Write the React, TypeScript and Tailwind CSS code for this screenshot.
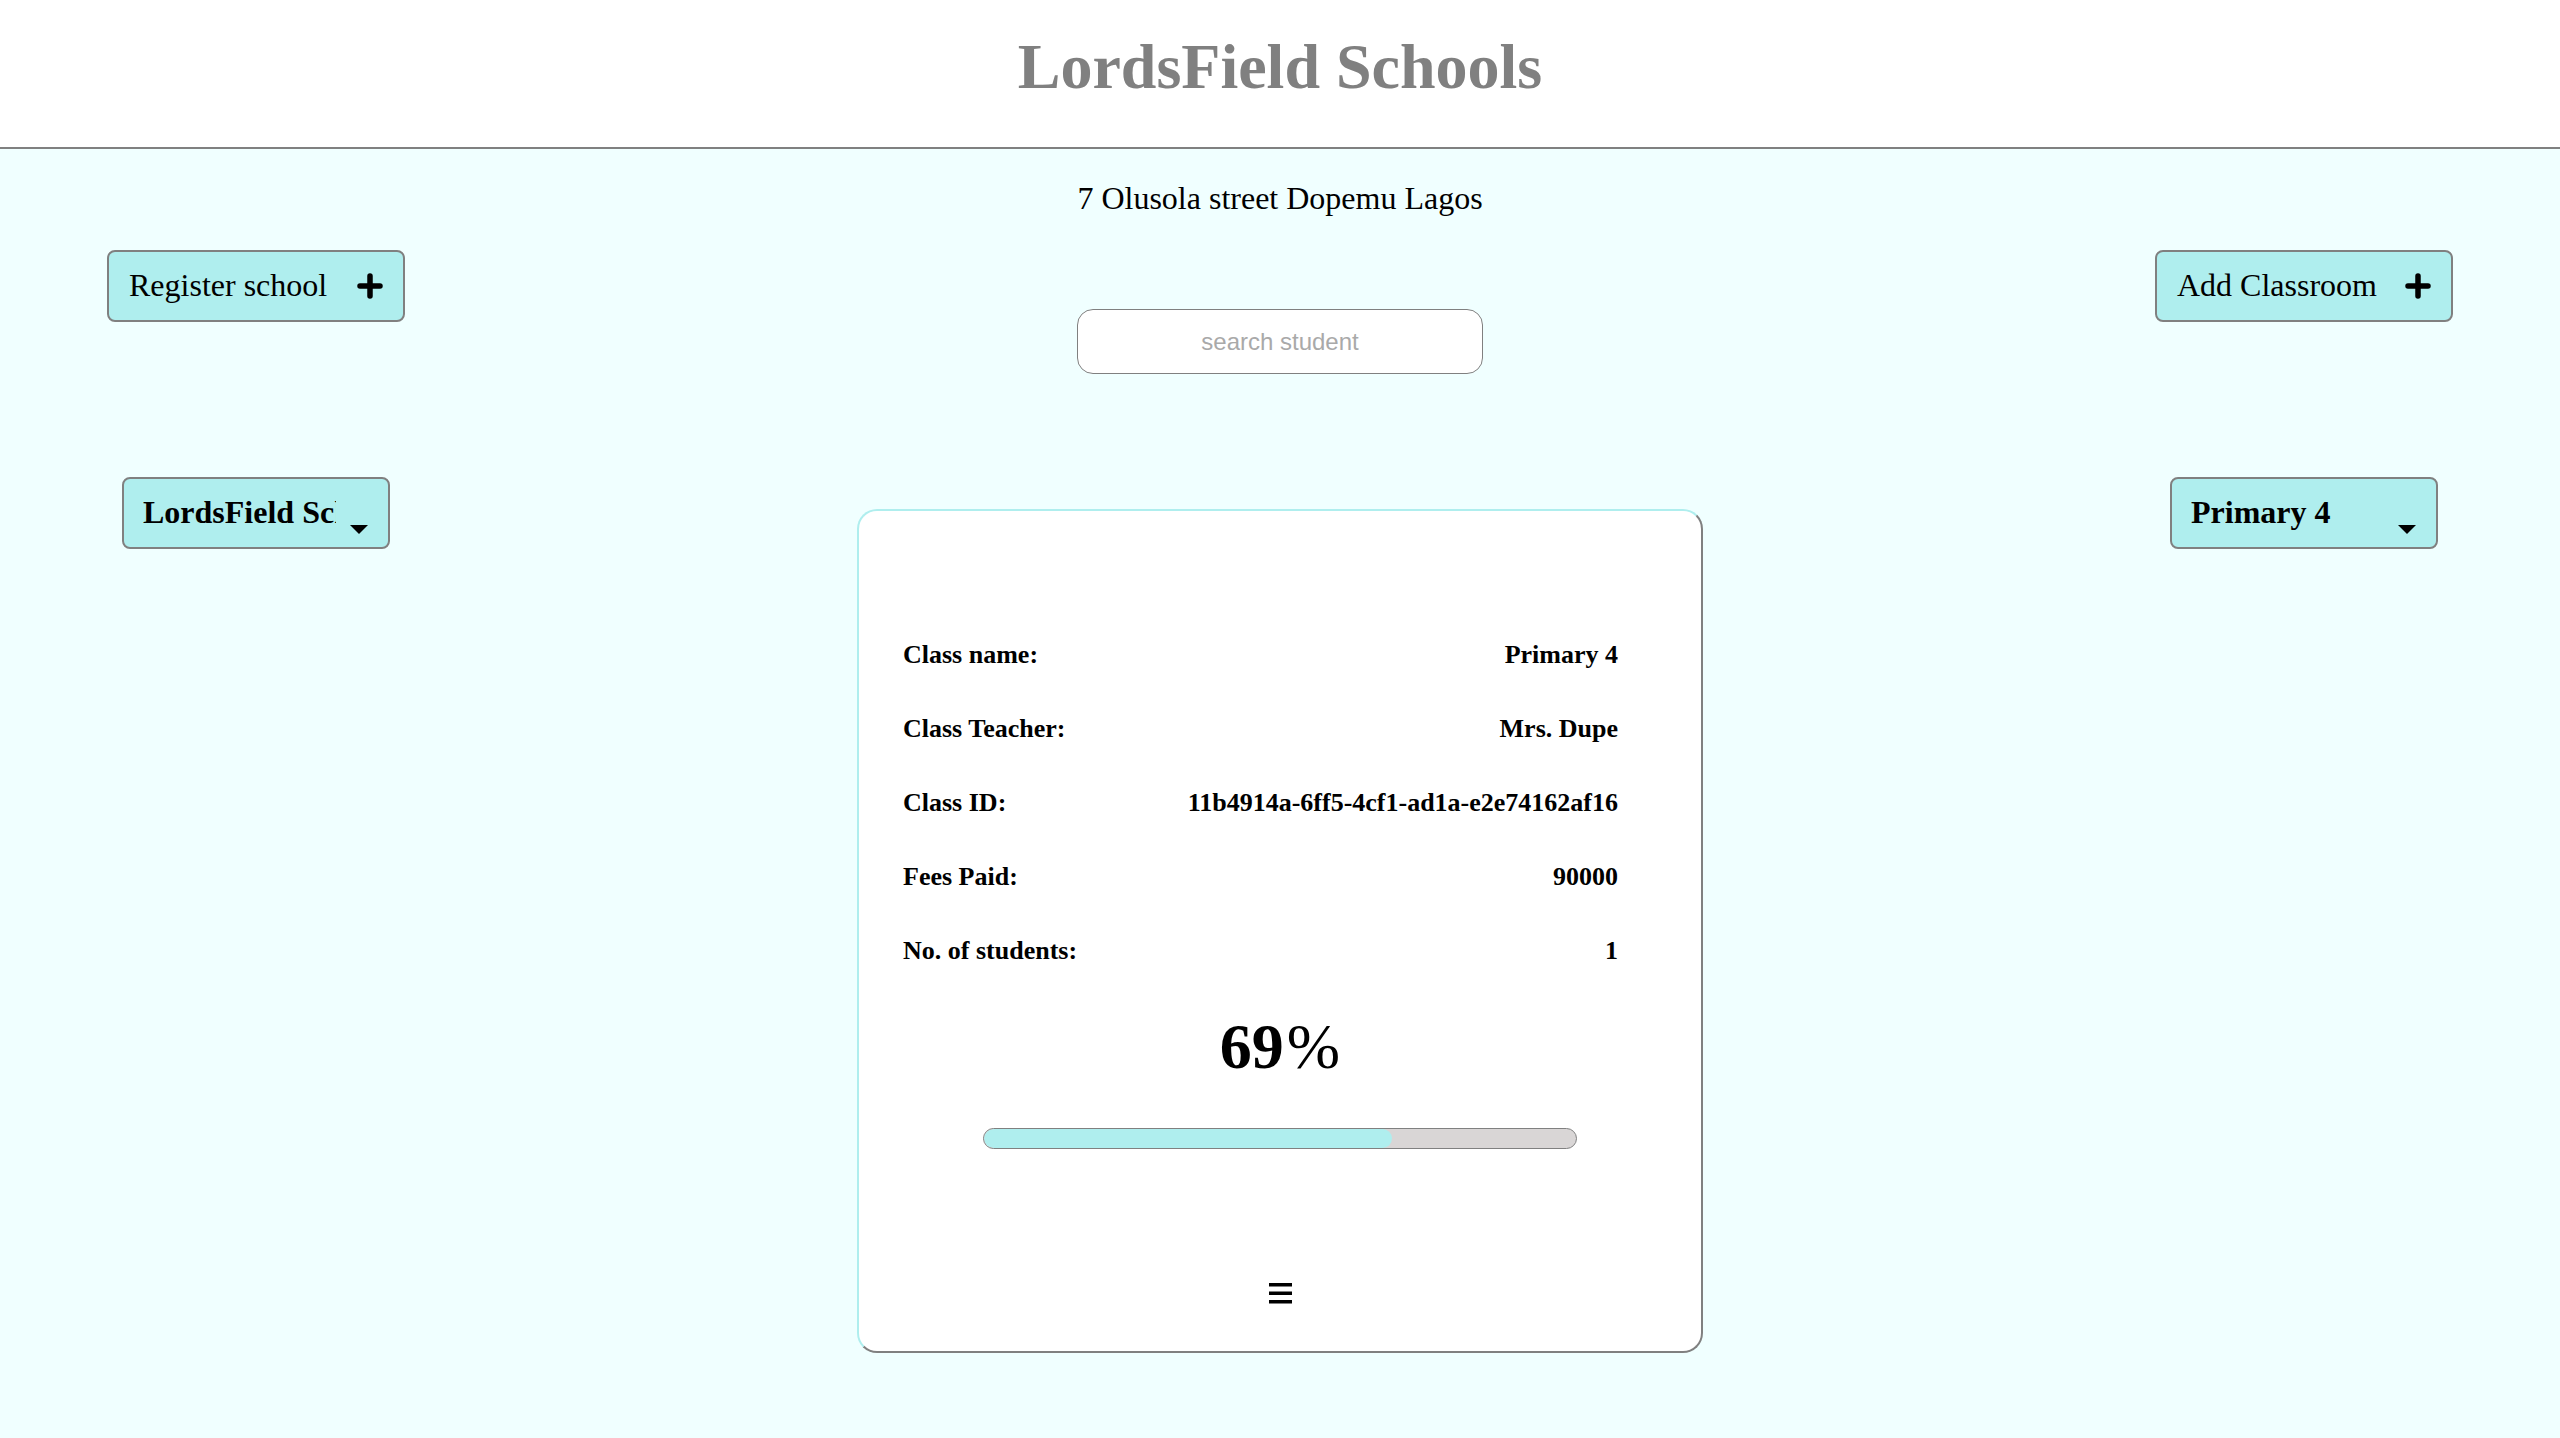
import React from "react";

const serif = "font-['Liberation_Serif','Times_New_Roman',serif]";

type Row = { label: string; value: string };

const rows: Row[] = [
  { label: "Class name:", value: "Primary 4" },
  { label: "Class Teacher:", value: "Mrs. Dupe" },
  { label: "Class ID:", value: "11b4914a-6ff5-4cf1-ad1a-e2e74162af16" },
  { label: "Fees Paid:", value: "90000" },
  { label: "No. of students:", value: "1" },
];

const progress = 69;

const PlusIcon = () => (
  <svg width="26" height="26" viewBox="0 0 26 26" className="shrink-0">
    <path d="M13 3 V23 M3 13 H23" stroke="black" strokeWidth="5.5" strokeLinecap="round" fill="none" />
  </svg>
);

const Caret = () => (
  <svg width="18" height="9" viewBox="0 0 18 9" className="shrink-0 self-end mb-[13px] ml-[14px]">
    <polygon points="0,0 18,0 9,9" fill="black" />
  </svg>
);

const ActionButton = ({ label }: { label: string }) => (
  <button className="w-[298px] h-[72px] flex items-center justify-between px-[20px] bg-[#afeeee] border-2 border-[#808080] rounded-[8px] text-[32px] leading-none text-black">
    <span className="pb-[3px]">{label}</span>
    <PlusIcon />
  </button>
);

const Dropdown = ({ value }: { value: string }) => (
  <div className="w-[268px] h-[72px] flex items-center pl-[19px] pr-[20px] bg-[#afeeee] border-2 border-[#808080] rounded-[8px]">
    <div className="w-[193px] overflow-hidden whitespace-nowrap text-[32px] leading-[40px] pb-[3px] font-bold text-black">
      {value}
    </div>
    <Caret />
  </div>
);

const HamburgerIcon = () => (
  <svg width="23" height="21" viewBox="0 0 23 21">
    <rect x="0" y="0" width="23" height="3.5" fill="black" />
    <rect x="0" y="8.5" width="23" height="3.5" fill="black" />
    <rect x="0" y="17" width="23" height="3.5" fill="black" />
  </svg>
);

const ClassCard = () => (
  <div className="w-[846px] h-[844px] mt-[135px] flex flex-col bg-white rounded-[20px] border-2 border-t-[#afeeee] border-l-[#afeeee] border-r-[#808080] border-b-[#808080]">
    <div className="pt-[131px] pl-[44px] pr-[83px] flex flex-col">
      {rows.map((row) => (
        <div key={row.label} className="h-[74px] flex justify-between text-[26px] leading-none font-bold text-black">
          <span>{row.label}</span>
          <span>{row.value}</span>
        </div>
      ))}
    </div>
    <div className="mt-[3px] text-center text-[64px] leading-none font-bold text-black">
      {progress}
      <span className="font-normal pl-[3px]">%</span>
    </div>
    <div className="mt-[49px] mx-auto w-[594px] h-[21px] rounded-full border border-[#808080] bg-[#d9d6d6] overflow-hidden">
      <div className="h-full rounded-full bg-[#afeeee]" style={{ width: `${progress}%` }} />
    </div>
    <div className="mt-[134px] flex justify-center">
      <HamburgerIcon />
    </div>
  </div>
);

export default function App() {
  return (
    <div className={`min-h-screen bg-[#f0ffff] ${serif}`}>
      <header className="h-[149px] bg-white border-b-2 border-[#808080] pt-[35px] text-center">
        <h1 className="text-[64px] leading-none font-bold text-[#808080]">LordsField Schools</h1>
      </header>

      <main className="grid grid-cols-[512px_1fr_512px] pb-[85px]">
        <div className="flex flex-col items-center">
          <div className="mt-[101px]">
            <ActionButton label="Register school" />
          </div>
          <div className="mt-[155px]">
            <Dropdown value="LordsField Schools" />
          </div>
        </div>

        <div className="flex flex-col items-center">
          <p className="mt-[33px] text-[32px] leading-none text-black">7 Olusola street Dopemu Lagos</p>
          <input
            type="text"
            placeholder="search student"
            className="mt-[95px] w-[406px] h-[65px] bg-white border border-[#808080] rounded-[16px] text-center text-[24px] font-['Liberation_Sans',Arial,sans-serif] placeholder:text-[#a9a9a9] outline-none"
          />
          <ClassCard />
        </div>

        <div className="flex flex-col items-center">
          <div className="mt-[101px]">
            <ActionButton label="Add Classroom" />
          </div>
          <div className="mt-[155px]">
            <Dropdown value="Primary 4" />
          </div>
        </div>
      </main>
    </div>
  );
}
